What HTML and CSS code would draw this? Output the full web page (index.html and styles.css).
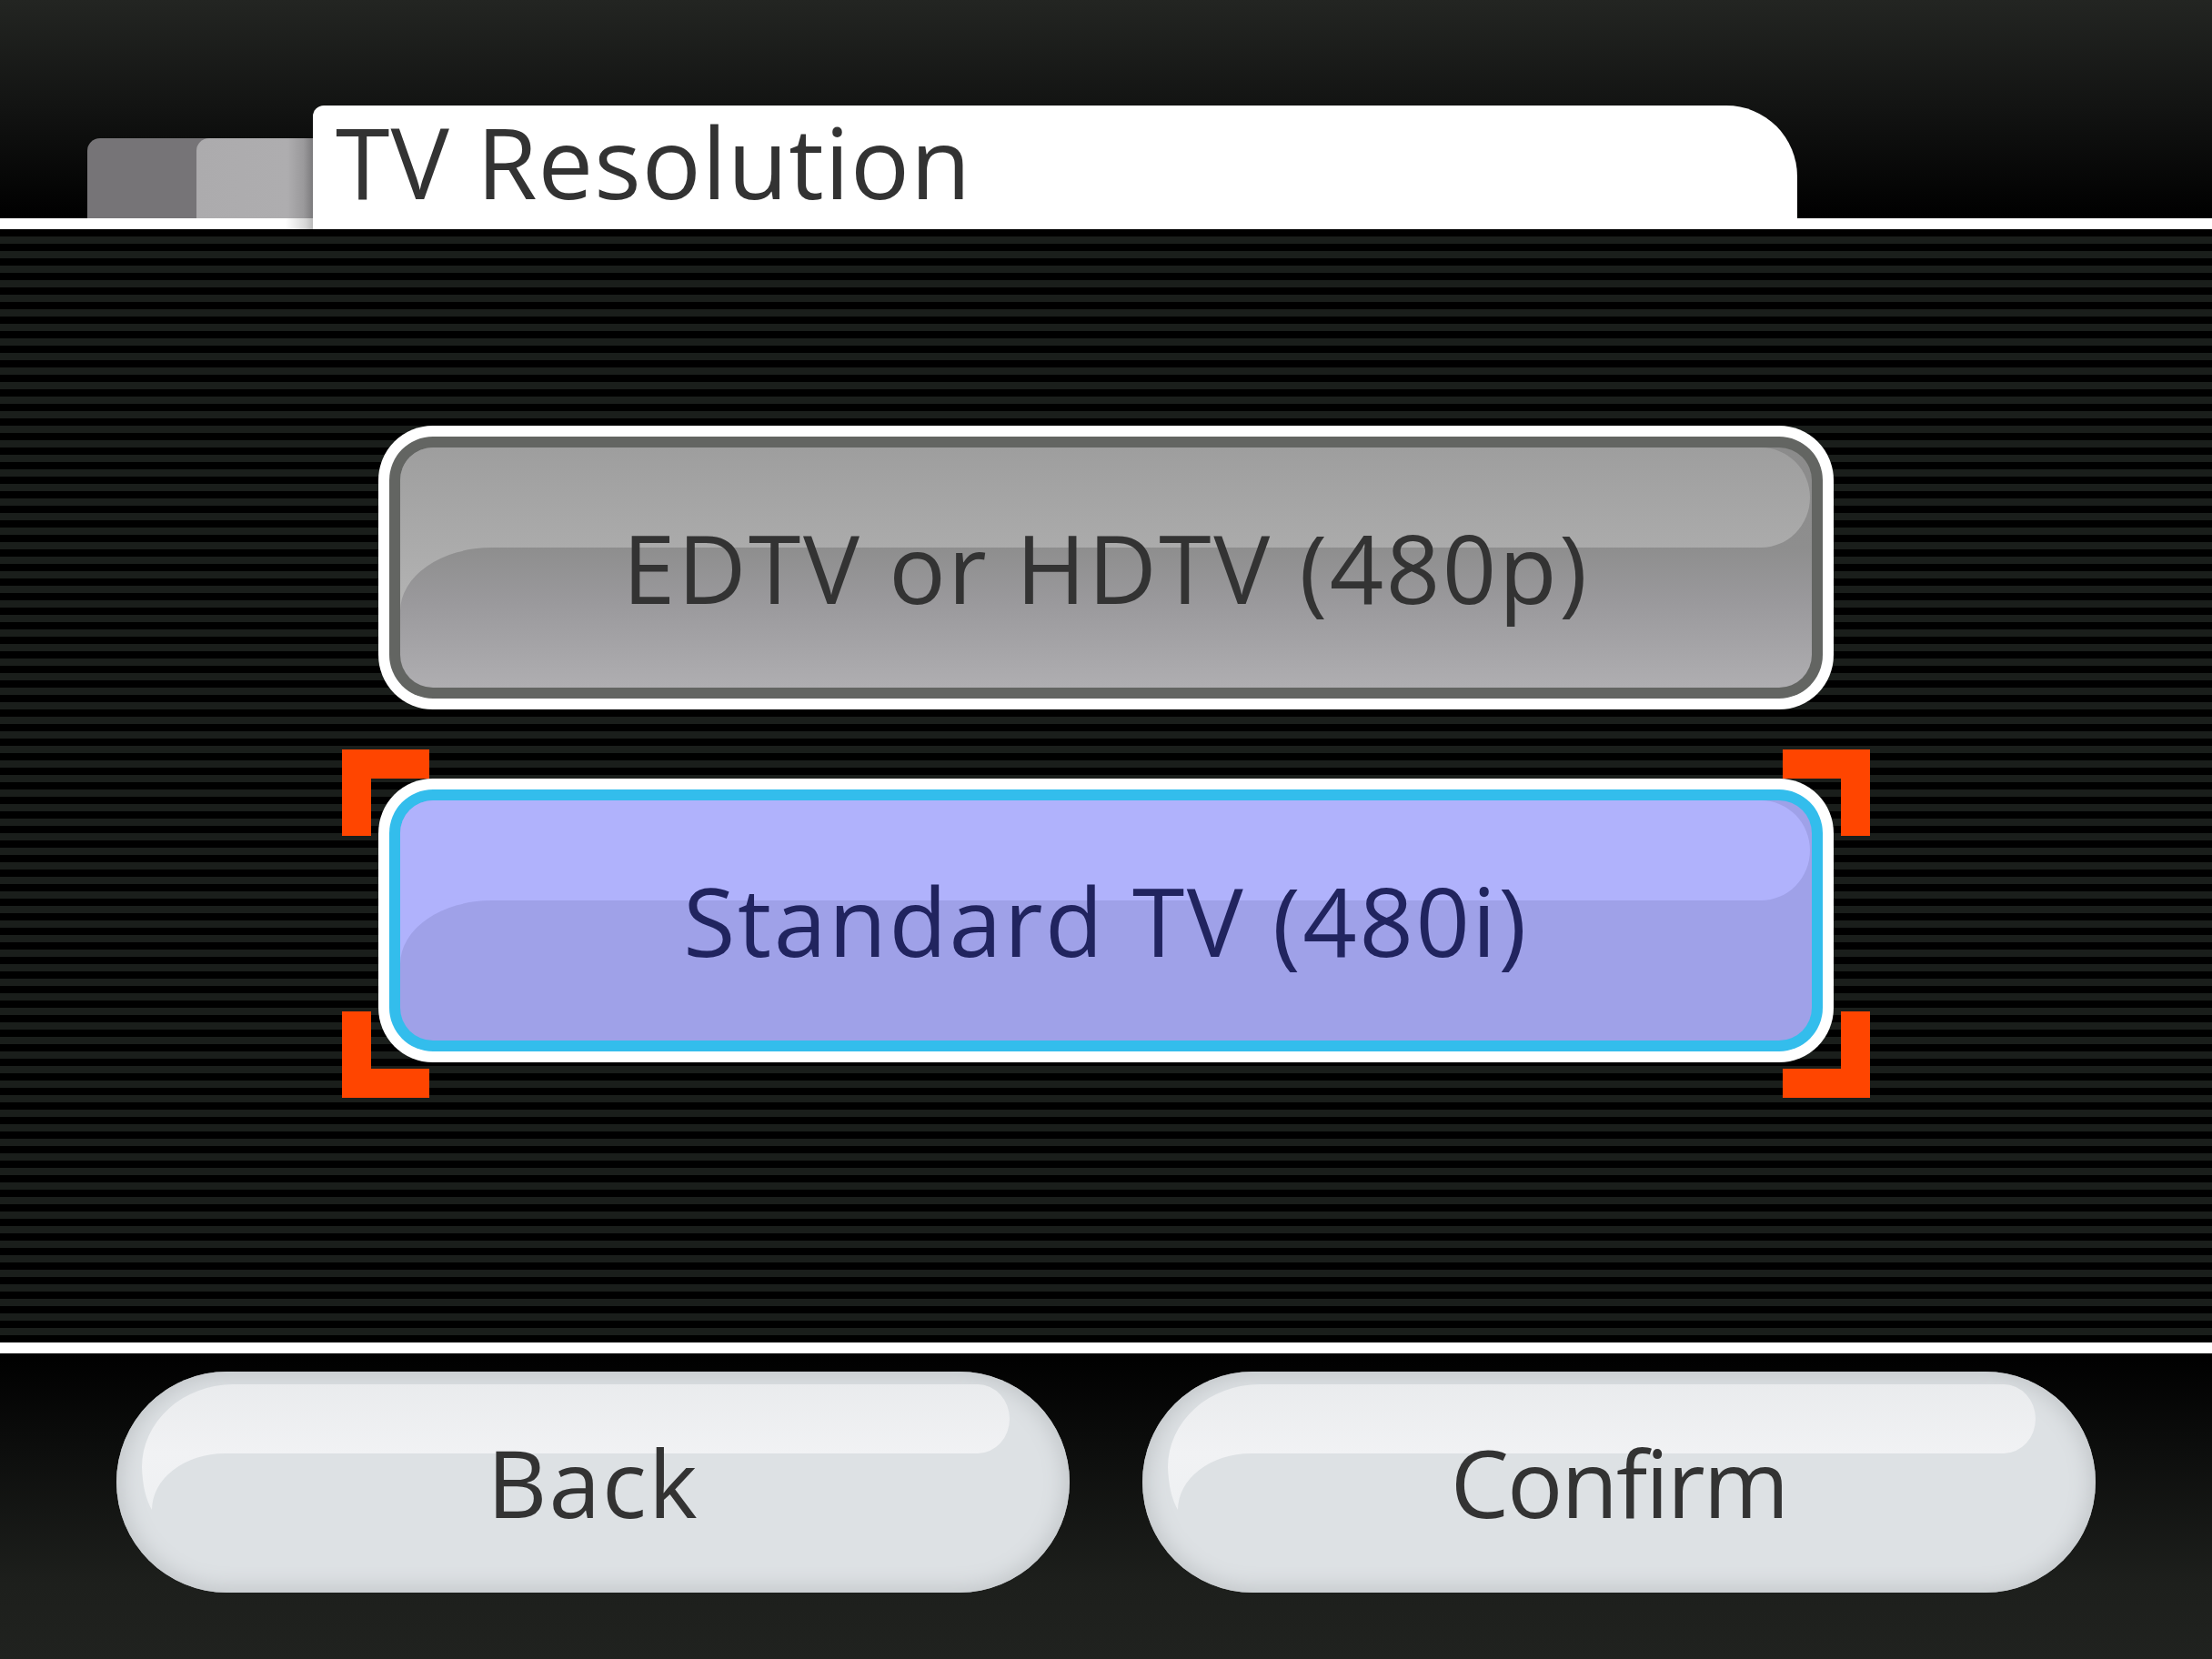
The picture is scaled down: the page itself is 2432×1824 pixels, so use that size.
FILE: index.html
```html
<!DOCTYPE html>
<html lang="en">
<head>
<meta charset="utf-8">
<title>TV Resolution</title>
<link rel="stylesheet" href="styles.css">
</head>
<body>
<div class="screen">
  <header class="head">
    <div class="tab tab-a"></div>
    <div class="tab tab-b"></div>
    <div class="tab tab-title"><h1 class="title">TV Resolution</h1></div>
  </header>
  <div class="rule rule-top"></div>
  <main class="stripes">
    <div class="opt">
      <div class="opt-ring">
        <div class="opt-face">
          <span class="gloss"></span>
          <span class="label">EDTV or HDTV (480p)</span>
        </div>
      </div>
    </div>
    <div class="opt opt-sel">
      <div class="opt-ring">
        <div class="opt-face">
          <span class="gloss"></span>
          <span class="label">Standard TV (480i)</span>
        </div>
      </div>
      <span class="brk brk-tl"></span>
      <span class="brk brk-tr"></span>
      <span class="brk brk-bl"></span>
      <span class="brk brk-br"></span>
    </div>
  </main>
  <div class="rule"></div>
  <footer class="foot">
    <div class="pill"><span class="pill-gloss"></span><span class="pill-label pill-label-wide">Back</span></div>
    <div class="pill"><span class="pill-gloss"></span><span class="pill-label pill-label-tight">Confirm</span></div>
  </footer>
</div>
</body>
</html>
```

FILE: styles.css
```css
html, body {
  margin: 0;
  padding: 0;
  background: #000;
}

.screen {
  width: 2432px;
  height: 1824px;
  overflow: hidden;
  display: flex;
  flex-direction: column;
  font-family: "Open Sans", "Liberation Sans", sans-serif;
}

/* ---------- header ---------- */
.head {
  height: 240px;
  flex: none;
  display: flex;
  align-items: flex-end;
  padding-left: 96px;
  box-sizing: border-box;
  background: linear-gradient(to bottom, #232522 0%, #121312 50%, #000 100%);
}

.tab {
  flex: none;
}

.tab-a {
  width: 140px;
  height: 88px;
  background: #767477;
  border-radius: 14px 0 0 0;
}

.tab-b {
  width: 128px;
  height: 88px;
  margin-left: -20px;
  background: linear-gradient(to right, #acabad 0, #aeadaf 100px, #9a999b 118px, #7b7a7c 128px);
  border-radius: 14px 0 0 0;
}

.tab-title {
  width: 1632px;
  height: 124px;
  background: #fff;
  border-radius: 12px 78px 0 0;
}

.title {
  margin: 0;
  padding: 8px 0 0 25px;
  font-size: 108px;
  line-height: 108px;
  font-weight: 400;
  letter-spacing: 1px;
  color: #333;
  white-space: nowrap;
}

/* ---------- rules ---------- */
.rule {
  height: 12px;
  flex: none;
  background: #fff;
}

.rule-top {
  background: linear-gradient(to right, #fff 0, #fff 314px, #d6d6d6 336px, #b9b9b9 344px, #fff 344px);
}

/* ---------- striped body ---------- */
.stripes {
  height: 1224px;
  flex: none;
  box-sizing: border-box;
  padding-top: 216px;
  display: flex;
  flex-direction: column;
  align-items: center;
  gap: 76px;
  background: repeating-linear-gradient(to bottom, #000 0, #000 8px, #1a1e1b 8px, #1a1e1b 16px);
}

.opt {
  position: relative;
  width: 1600px;
  height: 312px;
  box-sizing: border-box;
  padding: 12px;
  background: #fff;
  border-radius: 60px;
}

.opt-ring {
  height: 100%;
  box-sizing: border-box;
  padding: 12px;
  background: #636562;
  border-radius: 48px;
}

.opt-face {
  position: relative;
  height: 264px;
  border-radius: 36px;
  overflow: hidden;
  display: flex;
  align-items: center;
  justify-content: center;
  background: linear-gradient(to bottom, #8b8b8b 0, #8e8e8e 110px, #9a999c 170px, #afaeb1 264px);
}

.gloss {
  position: absolute;
  inset: 0;
  background: linear-gradient(to bottom, #9e9e9e 0, #ababab 110px, #b4b4b4 180px);
  clip-path: path('M0 0 H1496 A54 55 0 0 1 1496 110 H101 A101 70 0 0 0 0 180 Z');
}

.label {
  position: relative;
  font-size: 104px;
  line-height: 1;
  letter-spacing: 2.6px;
  color: #333;
  white-space: nowrap;
}

.opt-sel .opt-ring {
  background: #33bdec;
}

.opt-sel .opt-face {
  background: #9fa1e8;
}

.opt-sel .gloss {
  background: #b0b2fc;
}

.opt-sel .label {
  color: #21245f;
}

/* selection brackets */
.brk {
  position: absolute;
  width: 96px;
  height: 95px;
  box-sizing: border-box;
  border: 0 solid #ff4500;
}

.brk-tl { left: -40px; top: -32px; border-top-width: 32px; border-left-width: 32px; }
.brk-tr { right: -40px; top: -32px; border-top-width: 32px; border-right-width: 32px; }
.brk-bl { left: -40px; bottom: -39px; border-bottom-width: 32px; border-left-width: 32px; }
.brk-br { right: -40px; bottom: -39px; border-bottom-width: 32px; border-right-width: 32px; }

/* ---------- footer ---------- */
.foot {
  flex: 1;
  box-sizing: border-box;
  padding-top: 20px;
  display: flex;
  justify-content: center;
  align-items: flex-start;
  gap: 80px;
  background: linear-gradient(to bottom, #000 0%, #0c0d0c 30%, #1d1f1c 75%, #20221f 100%);
}

.pill {
  position: relative;
  width: 1048px;
  height: 243px;
  border-radius: 122px;
  overflow: hidden;
  display: flex;
  align-items: center;
  justify-content: center;
  background: #dde1e4;
  box-shadow: inset 0 0 22px 6px #c3c7ca;
}

.pill-gloss {
  position: absolute;
  inset: 0;
  background: linear-gradient(to bottom, #e8eaec 0, #f1f2f4 90px, #eef0f2 152px);
  clip-path: path('M129 14 H947 A35 38 0 0 1 947 90 H119 A80 62 0 0 0 39 152 Q29 135 28 105 A101 91 0 0 1 129 14 Z');
}

.pill-label {
  position: relative;
  font-size: 102px;
  line-height: 1;
  color: #333;
  white-space: nowrap;
}

.pill-label-wide {
  letter-spacing: 2px;
}

.pill-label-tight {
  letter-spacing: -2px;
}
```
